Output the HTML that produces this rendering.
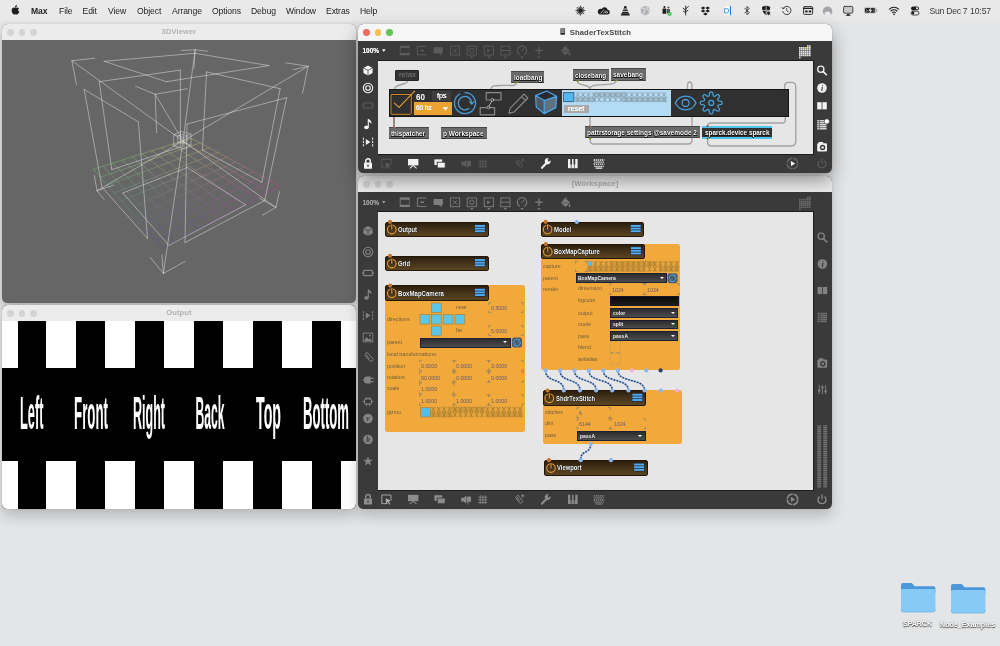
<!DOCTYPE html>
<html lang="en">
<head>
<meta charset="utf-8">
<title>Max - ShaderTexStitch</title>
<style>
*{box-sizing:border-box;margin:0;padding:0}
html,body{width:1000px;height:646px;overflow:hidden}
body{background:#e4e5e6;font-family:"Liberation Sans",sans-serif;position:relative;color:#222}
.abs{position:absolute}
svg{position:absolute;overflow:visible}
/* menubar */
#menubar{position:absolute;left:0;top:0;width:1000px;height:21px;background:#e9e9ea;font-size:8.6px;letter-spacing:-.1px;color:#1d1d1d}
#menubar span{position:absolute;top:5.7px;line-height:11px;white-space:nowrap}
/* windows */
.win{position:absolute;border-radius:5.5px;overflow:hidden;background:#3a3a3a}
.shadow{position:absolute;border-radius:6px}
.title{position:absolute;left:0;top:0;right:0;height:17px;background:#ececec;text-align:center;font-size:7.6px;line-height:17px;color:#b2b2b2;font-weight:bold;letter-spacing:.1px}
.title.active{background:#f6f6f6;color:#3c3c3c;font-weight:normal}
.tl{position:absolute;top:4.9px;width:6.8px;height:6.8px;margin-left:0;border-radius:50%;background:#d4d4d4}
.bar{position:absolute;background:#3a3a3a}
.patch{position:absolute;background:#e6e6e6}
/* max objects */
.obj{position:absolute;height:12px;background:#6a6a6a;border-top:1.6px solid #474747;border-bottom:1.6px solid #474747;color:#fff;font-weight:bold;white-space:nowrap;text-shadow:.5px .5px .2px #111,-.5px .5px .2px #111,.5px -.5px .2px #222,-.5px -.5px .2px #222}
.sx{position:absolute;display:inline-block;white-space:nowrap;transform-origin:0 50%;line-height:1.2}
/* sparck nodes */
.node{position:absolute;font-weight:bold;border-radius:2px;background:linear-gradient(#2d1f0d,#46341a 50%,#5a4522);border:1px solid #24170a;color:#fff;white-space:nowrap;text-shadow:.4px .4px .3px #000,-.4px .4px .3px #000,0 -.4px .3px #000}
.ham{position:absolute;right:2.4px;top:2.2px;width:11px;height:9.4px;background:#26262e;border-radius:1px}
.ham:before{content:"";position:absolute;left:.8px;right:.8px;top:1px;height:1.9px;background:#55adf0;box-shadow:0 2.75px 0 #55adf0,0 5.5px 0 #55adf0}
.orange{position:absolute;background:#f2a93c;border-radius:2.5px}
.lbl{position:absolute;font-size:6.2px;line-height:8px;color:#6b5a3a;white-space:nowrap}
.num{position:absolute;font-size:6.2px;line-height:8px;color:#6b5a3a;white-space:nowrap}
.dd{position:absolute;background:linear-gradient(#2c2c2e,#4c4c4c);border:1px solid #1a2036}
.dd:after{content:"";position:absolute;right:2.4px;top:2.6px;border-left:2.3px solid transparent;border-right:2.3px solid transparent;border-top:2.8px solid #fff}
</style>
</head>
<body>
<div id="root" style="position:absolute;left:0;top:0;width:1000px;height:646px;will-change:transform">

<!-- ============ MENU BAR ============ -->
<div id="menubar">
<span style="left:31px;font-weight:bold">Max</span>
<span style="left:59px">File</span>
<span style="left:82.5px">Edit</span>
<span style="left:108px">View</span>
<span style="left:137px">Object</span>
<span style="left:172px">Arrange</span>
<span style="left:212px">Options</span>
<span style="left:251px">Debug</span>
<span style="left:286px">Window</span>
<span style="left:326px">Extras</span>
<span style="left:360px">Help</span>
<span style="left:929.5px;color:#3a3a3a;letter-spacing:-.25px">Sun Dec 7</span>
<span style="left:970px;color:#3a3a3a">10:57</span>
<svg style="left:0;top:0" width="1000" height="21" viewBox="0 0 1000 21" fill="none" stroke-linecap="round" stroke-linejoin="round"><path d="M13.9 7.4c.7 0 1.1.4 1.6.4s1-.45 1.8-.4c.6 0 1.3.3 1.8.95-1.4.9-1.2 2.8.25 3.4-.3.8-.7 1.5-1.15 2-.4.5-.8.8-1.3.8s-.8-.3-1.4-.3-.9.3-1.4.3-.9-.4-1.35-.95c-1.1-1.4-1.45-3.6-.75-4.8.4-.8 1.15-1.35 1.9-1.4zM17 5c.1.65-.15 1.25-.5 1.7-.4.45-.95.75-1.5.7-.1-.6.2-1.2.5-1.6.4-.45 1-.75 1.5-.8z" fill="#1e1e1e"/><path d="M581.60 10.60L585.00 10.60M581.51 11.06L583.82 12.02M581.25 11.45L583.65 13.85M580.86 11.71L581.82 14.02M580.40 11.80L580.40 15.20M579.94 11.71L578.98 14.02M579.55 11.45L577.15 13.85M579.29 11.06L576.98 12.02M579.20 10.60L575.80 10.60M579.29 10.14L576.98 9.18M579.55 9.75L577.15 7.35M579.94 9.49L578.98 7.18M580.40 9.40L580.40 6.00M580.86 9.49L581.82 7.18M581.25 9.75L583.65 7.35M581.51 10.14L583.82 9.18" stroke="#1e1e1e" stroke-width=".8"/><circle cx="580.4" cy="10.6" r="1.7" fill="#1e1e1e"/><path d="M599.8 14.4h7.6a2.3 2.3 0 0 0 .2-4.6a3.2 3.2 0 0 0-6-.9a2.8 2.8 0 0 0-1.8 5.5z" fill="#1e1e1e"/><path d="M600.8 13.2l2.8-3.4M603.6 13.2l1.8-2.2" stroke="#e9e9ea" stroke-width=".7"/><circle cx="606.5" cy="12.3" r=".9" stroke="#e9e9ea" stroke-width=".6"/><path d="M624.5 6h1.6l2.8 7.4h-7.2z" fill="#1e1e1e"/><path d="M620.8 15.4l.5-2h8l.5 2z" fill="#1e1e1e"/><path d="M623.4 9h3.8M622.6 11.4h5.4" stroke="#e9e9ea" stroke-width=".9"/><circle cx="645.2" cy="10.6" r="4.6" fill="#b4b4b8"/><path d="M642.4 8.2q1.8-.6 2.6.8t-.6 2.2-.4 2.4M647 7.2q-.4 1.6 1 2.4t1.4 2.6" stroke="#e9e9ea" stroke-width="1"/><circle cx="664.4" cy="7" r="1.1" fill="#1e1e1e"/><rect x="662.5" y="8.6" width="3.8" height="5.2" rx=".5" fill="#1e1e1e"/><circle cx="668.4" cy="7.6" r="1" fill="#555"/><rect x="666.8" y="9" width="3.2" height="4.4" rx=".5" fill="#555"/><circle cx="669.6" cy="13.8" r="2.1" fill="#2db842"/><path d="M668.6 13.8l.8.8 1.3-1.5" stroke="#fff" stroke-width=".7"/><path d="M685.7 15v-9M685.7 10.4l-2.6-2.2M685.7 9l2.8-2.6M685.7 12.4l-2.2-1M685.7 11.6l2.2-1.2" stroke="#1e1e1e" stroke-width=".9"/><path d="M703.1 6.5l2.3 1.5-2.3 1.5-2.3-1.5zM707.7 6.5l2.3 1.5-2.3 1.5-2.3-1.5zM703.1 9.5l2.3 1.5-2.3 1.5-2.3-1.5zM707.7 9.5l2.3 1.5-2.3 1.5-2.3-1.5zM705.4 12.5l2.3 1.5-2.3 1.5-2.3-1.5z" fill="#1e1e1e"/><rect x="723.4" y="5.8" width="7.8" height="9.6" rx=".8" fill="#fff" stroke="#d0d4da" stroke-width=".4"/><path d="M730.4 6.6v8" stroke="#2f6fd8" stroke-width="1.1"/><path d="M725 8.4h1.4a2.3 2.3 0 0 1 0 4.6h-1.4z" stroke="#3aa0e8" stroke-width="1"/><path d="M744.8 8.2l4.4 4.4-2.2 2.2v-8.4l2.2 2.2-4.4 4.4" stroke="#1e1e1e" stroke-width=".8"/><path d="M762 7q4.1-2.6 8.2 0 0 5.6-4.1 8.2-4.1-2.6-4.1-8.2z" fill="#1e1e1e"/><path d="M766.1 6v9M762.4 10.4h7.4" stroke="#e9e9ea" stroke-width=".7"/><circle cx="768.6" cy="13.2" r="2" fill="#1e1e1e" stroke="#e9e9ea" stroke-width=".7"/><path d="M783.2 8.2a4.2 4.2 0 1 1-.5 3.4" stroke="#1e1e1e" stroke-width=".8"/><path d="M781.8 7.4l1.2 1.6 1.6-1" stroke="#1e1e1e" stroke-width=".7"/><path d="M786.7 8.2v2.6l1.6 1" stroke="#1e1e1e" stroke-width=".7"/><rect x="803.6" y="6.6" width="9" height="7.8" rx="1" stroke="#1e1e1e" stroke-width=".9"/><path d="M803.6 8.4h9" stroke="#1e1e1e" stroke-width="1.4"/><rect x="805.2" y="10.4" width="2.4" height="2" fill="#1e1e1e"/><rect x="808.8" y="10.4" width="2.4" height="2" fill="#1e1e1e"/><path d="M824.4 15a4.8 4.8 0 1 1 6.4 0q-.2-3.4-3.2-3.4t-3.2 3.4z" fill="#a4a4a8"/><rect x="843.6" y="6.4" width="9.2" height="6.8" rx="1" fill="#c9c9cc" stroke="#333" stroke-width=".9"/><path d="M846.6 15.4h3.2l-.6-1.4h-2z" fill="#1e1e1e"/><path d="M846.2 15.4h4" stroke="#1e1e1e" stroke-width=".7"/><rect x="864" y="7.2" width="12" height="6.4" rx="1.6" fill="#b9b9bc"/><rect x="865" y="8.1" width="10" height="4.6" rx="1" fill="#2a2a2a"/><path d="M876.7 9.4v2" stroke="#999" stroke-width=".9"/><path d="M870.9 7.6l-2.2 3.2h1.6l-.8 2.6 2.4-3.4h-1.6z" fill="#e9e9ea" stroke="#e9e9ea" stroke-width=".3"/><path d="M866 9.2l1.6 1.4-1.6 1.2M874.6 9.2l-1.4 1.4 1.4 1.2" stroke="#bbb" stroke-width=".6"/><path d="M889.4 9.2a6.5 6.5 0 0 1 9.2 0M891 11a4.2 4.2 0 0 1 6 0M892.6 12.7a2 2 0 0 1 2.8 0" stroke="#1e1e1e" stroke-width="1.1"/><circle cx="894" cy="14.4" r=".8" fill="#1e1e1e"/><rect x="911" y="6.4" width="8" height="3.8" rx="1.9" fill="#1e1e1e"/><circle cx="917" cy="8.3" r="1.1" fill="#e9e9ea"/><rect x="911" y="11.2" width="8" height="3.8" rx="1.9" fill="none" stroke="#1e1e1e" stroke-width=".8"/><circle cx="913" cy="13.1" r="1.3" fill="#1e1e1e"/></svg>
</div>

<!-- ============ 3DViewer ============ -->
<div class="shadow" style="left:2px;top:24px;width:354px;height:279px;box-shadow:0 7px 14px rgba(0,0,0,.2),0 0 1px rgba(0,0,0,.4)"></div>
<div class="win" id="viewer" style="left:2px;top:24px;width:354px;height:279px;background:#666">
<div class="title" style="height:15.6px;line-height:15.8px">3DViewer<i class="tl" style="left:5px"></i><i class="tl" style="left:16.5px"></i><i class="tl" style="left:28px"></i></div>
<svg style="left:-2px;top:-24px" width="356" height="303" viewBox="0 0 356 303" fill="none" stroke-linecap="round">
<defs><linearGradient id="g0" gradientUnits="userSpaceOnUse" x1="93.3" y1="169.3" x2="191.2" y2="138.2"><stop offset="0" stop-color="#6ed778"/><stop offset="1" stop-color="#cdcd6e"/></linearGradient><linearGradient id="g1" gradientUnits="userSpaceOnUse" x1="93.3" y1="169.3" x2="163.4" y2="248.2"><stop offset="0" stop-color="#6ed778"/><stop offset="1" stop-color="#3c3ca0"/></linearGradient><linearGradient id="g2" gradientUnits="userSpaceOnUse" x1="100.3" y1="177.2" x2="200.1" y2="143.0"><stop offset="0" stop-color="#69c87c"/><stop offset="1" stop-color="#cdbe73"/></linearGradient><linearGradient id="g3" gradientUnits="userSpaceOnUse" x1="103.1" y1="166.2" x2="175.1" y2="242.0"><stop offset="0" stop-color="#78d677"/><stop offset="1" stop-color="#4a3ca0"/></linearGradient><linearGradient id="g4" gradientUnits="userSpaceOnUse" x1="107.3" y1="185.1" x2="209.0" y2="147.7"><stop offset="0" stop-color="#64b880"/><stop offset="1" stop-color="#cdb078"/></linearGradient><linearGradient id="g5" gradientUnits="userSpaceOnUse" x1="112.9" y1="163.1" x2="186.7" y2="235.7"><stop offset="0" stop-color="#81d576"/><stop offset="1" stop-color="#593ca0"/></linearGradient><linearGradient id="g6" gradientUnits="userSpaceOnUse" x1="114.3" y1="193.0" x2="217.9" y2="152.5"><stop offset="0" stop-color="#5fa884"/><stop offset="1" stop-color="#cda27d"/></linearGradient><linearGradient id="g7" gradientUnits="userSpaceOnUse" x1="122.7" y1="160.0" x2="198.4" y2="229.5"><stop offset="0" stop-color="#8ad475"/><stop offset="1" stop-color="#683ca0"/></linearGradient><linearGradient id="g8" gradientUnits="userSpaceOnUse" x1="121.3" y1="200.9" x2="226.8" y2="157.2"><stop offset="0" stop-color="#5a9988"/><stop offset="1" stop-color="#cd9382"/></linearGradient><linearGradient id="g9" gradientUnits="userSpaceOnUse" x1="132.5" y1="156.9" x2="210.1" y2="223.2"><stop offset="0" stop-color="#94d374"/><stop offset="1" stop-color="#763ca0"/></linearGradient><linearGradient id="g10" gradientUnits="userSpaceOnUse" x1="128.3" y1="208.8" x2="235.7" y2="162.0"><stop offset="0" stop-color="#558a8c"/><stop offset="1" stop-color="#cd8487"/></linearGradient><linearGradient id="g11" gradientUnits="userSpaceOnUse" x1="142.2" y1="153.8" x2="221.8" y2="217.0"><stop offset="0" stop-color="#9ed273"/><stop offset="1" stop-color="#843ca0"/></linearGradient><linearGradient id="g12" gradientUnits="userSpaceOnUse" x1="135.4" y1="216.6" x2="244.5" y2="166.8"><stop offset="0" stop-color="#507a90"/><stop offset="1" stop-color="#cd768c"/></linearGradient><linearGradient id="g13" gradientUnits="userSpaceOnUse" x1="152.0" y1="150.6" x2="233.4" y2="210.8"><stop offset="0" stop-color="#a7d172"/><stop offset="1" stop-color="#933ca0"/></linearGradient><linearGradient id="g14" gradientUnits="userSpaceOnUse" x1="142.4" y1="224.5" x2="253.4" y2="171.5"><stop offset="0" stop-color="#4b6a94"/><stop offset="1" stop-color="#cd6891"/></linearGradient><linearGradient id="g15" gradientUnits="userSpaceOnUse" x1="161.8" y1="147.5" x2="245.1" y2="204.5"><stop offset="0" stop-color="#b0d071"/><stop offset="1" stop-color="#a23ca0"/></linearGradient><linearGradient id="g16" gradientUnits="userSpaceOnUse" x1="149.4" y1="232.4" x2="262.3" y2="176.3"><stop offset="0" stop-color="#465b98"/><stop offset="1" stop-color="#cd5996"/></linearGradient><linearGradient id="g17" gradientUnits="userSpaceOnUse" x1="171.6" y1="144.4" x2="256.8" y2="198.3"><stop offset="0" stop-color="#bacf70"/><stop offset="1" stop-color="#b03ca0"/></linearGradient><linearGradient id="g18" gradientUnits="userSpaceOnUse" x1="156.4" y1="240.3" x2="271.2" y2="181.0"><stop offset="0" stop-color="#414c9c"/><stop offset="1" stop-color="#cd4a9b"/></linearGradient><linearGradient id="g19" gradientUnits="userSpaceOnUse" x1="181.4" y1="141.3" x2="268.4" y2="192.0"><stop offset="0" stop-color="#c4ce6f"/><stop offset="1" stop-color="#be3ca0"/></linearGradient><linearGradient id="g20" gradientUnits="userSpaceOnUse" x1="163.4" y1="248.2" x2="280.1" y2="185.8"><stop offset="0" stop-color="#3c3ca0"/><stop offset="1" stop-color="#cd3ca0"/></linearGradient><linearGradient id="g21" gradientUnits="userSpaceOnUse" x1="191.2" y1="138.2" x2="280.1" y2="185.8"><stop offset="0" stop-color="#cdcd6e"/><stop offset="1" stop-color="#cd3ca0"/></linearGradient></defs>
<g stroke-width="0.7" stroke-opacity="0.55"><line x1="93.3" y1="169.3" x2="191.2" y2="138.2" stroke="url(#g0)"/><line x1="93.3" y1="169.3" x2="163.4" y2="248.2" stroke="url(#g1)"/><line x1="100.3" y1="177.2" x2="200.1" y2="143.0" stroke="url(#g2)"/><line x1="103.1" y1="166.2" x2="175.1" y2="242.0" stroke="url(#g3)"/><line x1="107.3" y1="185.1" x2="209.0" y2="147.7" stroke="url(#g4)"/><line x1="112.9" y1="163.1" x2="186.7" y2="235.7" stroke="url(#g5)"/><line x1="114.3" y1="193.0" x2="217.9" y2="152.5" stroke="url(#g6)"/><line x1="122.7" y1="160.0" x2="198.4" y2="229.5" stroke="url(#g7)"/><line x1="121.3" y1="200.9" x2="226.8" y2="157.2" stroke="url(#g8)"/><line x1="132.5" y1="156.9" x2="210.1" y2="223.2" stroke="url(#g9)"/><line x1="128.3" y1="208.8" x2="235.7" y2="162.0" stroke="url(#g10)"/><line x1="142.2" y1="153.8" x2="221.8" y2="217.0" stroke="url(#g11)"/><line x1="135.4" y1="216.6" x2="244.5" y2="166.8" stroke="url(#g12)"/><line x1="152.0" y1="150.6" x2="233.4" y2="210.8" stroke="url(#g13)"/><line x1="142.4" y1="224.5" x2="253.4" y2="171.5" stroke="url(#g14)"/><line x1="161.8" y1="147.5" x2="245.1" y2="204.5" stroke="url(#g15)"/><line x1="149.4" y1="232.4" x2="262.3" y2="176.3" stroke="url(#g16)"/><line x1="171.6" y1="144.4" x2="256.8" y2="198.3" stroke="url(#g17)"/><line x1="156.4" y1="240.3" x2="271.2" y2="181.0" stroke="url(#g18)"/><line x1="181.4" y1="141.3" x2="268.4" y2="192.0" stroke="url(#g19)"/><line x1="163.4" y1="248.2" x2="280.1" y2="185.8" stroke="url(#g20)"/><line x1="191.2" y1="138.2" x2="280.1" y2="185.8" stroke="url(#g21)"/></g>
<g stroke="#d8d8d8" stroke-width="0.7" stroke-opacity="0.78"><path d="M71.9 60.7L94.7 58.2M71.9 60.7L76.5 84.8M71.9 60.7L183.0 141.0M195.1 49.8L181.4 50.5M195.1 49.8L207.3 51.2M195.1 49.8L194.0 68.0M195.1 49.8L183.0 141.0M308.1 66.3L285.7 62.8M308.1 66.3L293.1 69.7M308.1 66.3L302.5 93.5M308.1 66.3L183.0 141.0M97.1 190.7L94.3 175.7M97.1 190.7L113.9 185.1M97.1 190.7L104.1 199.5M97.1 190.7L183.0 141.0M275.9 207.5L279.4 191.7M275.9 207.5L262.3 215.2M275.9 207.5L259.8 198.4M275.9 207.5L183.0 141.0M163.4 273.4L150.2 257.4M163.4 273.4L185.0 261.4M163.4 273.4L162.0 255.2M163.4 273.4L183.0 141.0M155.2 94.3L135.6 86.2M155.2 94.3L187.4 88.7M155.2 94.3L156.6 132.6M155.2 94.3L183.0 141.0M104.1 61.3L195.1 53.3M195.1 53.3L268.9 65.6M268.9 65.6L166.4 81.7M166.4 81.7L104.1 61.3M99.2 81.7L180.4 70.1M180.4 70.1L180.4 147.0M180.4 147.0L111.8 169.7M111.8 169.7L99.2 81.7M84.1 89.3L138.4 121.9M138.4 121.9L147.5 238.4M147.5 238.4L102.0 187.2M102.0 187.2L84.1 89.3M206.6 71.9L280.1 88.7M280.1 88.7L261.9 182.3M261.9 182.3L202.4 150.1M202.4 150.1L206.6 71.9M286.7 97.7L187.0 124.0M187.0 124.0L185.0 242.6M185.0 242.6L264.7 200.5M264.7 200.5L286.7 97.7M122.8 193.0L187.2 167.5M187.2 167.5L245.5 204.8M245.5 204.8L169.0 245.4M169.0 245.4L122.8 193.0"/><path d="M174 134.5l6.5-3 10.5 2.5v11l-7 4-10-3.5zM174 134.5l10 3 7-3.5M184 137.5v11.5M180.5 131.5v10l-6.5 3.5M180.5 141.5l10.5 3.5M178 136l4-1.5 5 1v6l-4 2-5-1.5z" stroke-width="0.6"/></g></svg>
</div>

<!-- ============ Output ============ -->
<div class="shadow" style="left:2px;top:305px;width:354px;height:203.6px;box-shadow:0 7px 14px rgba(0,0,0,.2),0 0 1px rgba(0,0,0,.4)"></div>
<div class="win" id="output" style="left:2px;top:305px;width:354px;height:203.6px;background:#000">
<div class="title" style="height:15.6px;line-height:15.8px">Output<i class="tl" style="left:5px"></i><i class="tl" style="left:16.5px"></i><i class="tl" style="left:28px"></i></div>
<div class="abs" style="left:0;top:15.6px;width:354px;height:188px;background:#000"></div>
<div class="abs" style="left:0px;top:15.6px;width:15.5px;height:47.1px;background:#fff"></div>
<div class="abs" style="left:0px;top:155.5px;width:15.5px;height:48.2px;background:#fff"></div>
<div class="abs" style="left:44.3px;top:15.6px;width:30px;height:47.1px;background:#fff"></div>
<div class="abs" style="left:44.3px;top:155.5px;width:30px;height:48.2px;background:#fff"></div>
<div class="abs" style="left:103.3px;top:15.6px;width:30px;height:47.1px;background:#fff"></div>
<div class="abs" style="left:103.3px;top:155.5px;width:30px;height:48.2px;background:#fff"></div>
<div class="abs" style="left:162.3px;top:15.6px;width:30px;height:47.1px;background:#fff"></div>
<div class="abs" style="left:162.3px;top:155.5px;width:30px;height:48.2px;background:#fff"></div>
<div class="abs" style="left:221.3px;top:15.6px;width:30px;height:47.1px;background:#fff"></div>
<div class="abs" style="left:221.3px;top:155.5px;width:30px;height:48.2px;background:#fff"></div>
<div class="abs" style="left:280.3px;top:15.6px;width:30px;height:47.1px;background:#fff"></div>
<div class="abs" style="left:280.3px;top:155.5px;width:30px;height:48.2px;background:#fff"></div>
<div class="abs" style="left:339.3px;top:15.6px;width:14.7px;height:47.1px;background:#fff"></div>
<div class="abs" style="left:339.3px;top:155.5px;width:14.7px;height:48.2px;background:#fff"></div>
<svg style="left:0;top:0" width="354" height="204" viewBox="0 0 354 204" font-family="'Liberation Sans',sans-serif" font-size="46" font-weight="bold" fill="#fff"><text x="18" y="124" textLength="23.5" lengthAdjust="spacingAndGlyphs">Left</text><text x="72" y="124" textLength="34" lengthAdjust="spacingAndGlyphs">Front</text><text x="131" y="124" textLength="32" lengthAdjust="spacingAndGlyphs">Right</text><text x="193.5" y="124" textLength="29" lengthAdjust="spacingAndGlyphs">Back</text><text x="254" y="124" textLength="25" lengthAdjust="spacingAndGlyphs">Top</text><text x="301" y="124" textLength="46" lengthAdjust="spacingAndGlyphs">Bottom</text></svg>
</div>

<!-- ============ Workspace ============ -->
<div class="shadow" style="left:358px;top:176px;width:474px;height:332.6px;box-shadow:0 7px 14px rgba(0,0,0,.2),0 0 1px rgba(0,0,0,.4)"></div>
<div class="win" id="workspace" style="left:358px;top:176px;width:474px;height:332.6px">
<div class="title" style="height:16.4px;line-height:16.4px">[Workspace]<i class="tl" style="left:5px"></i><i class="tl" style="left:16.5px"></i><i class="tl" style="left:28px"></i></div>
<div class="patch" style="left:20px;top:35px;width:436.2px;height:279.6px;border:1px solid #1c1c1c;border-left:0"></div>
<div class="abs" style="left:-358px;top:-176px;width:1000px;height:646px">
<svg style="left:0;top:0" width="1000" height="646" viewBox="0 0 1000 646" fill="none" stroke="#7e7e7e" stroke-width="1"><path d="M400.2 197.6v9.2" stroke-width="0.9"/><path d="M409.4 197.6v9.2" stroke-width="0.5"/><path d="M400 198.6h9.6M400 205.79999999999998h9.6" stroke-width="2.2"/><path d="M426.4 198.0h-9v8.4h9" stroke-width="1"/><path d="M420.5 202.2h3.5" stroke-width="1.6"/><path d="M433.6 199.0h9.3v6h-1.6l.4 2.4-2.8-2.4h-5.3z" fill="#7e7e7e" stroke="none"/><rect x="450.4" y="197.9" width="9.2" height="8.8" stroke-width="0.9"/><path d="M453.0 200.29999999999998l4 4M457.0 200.29999999999998l-4 4" stroke-width="0.9"/><rect x="467.2" y="197.9" width="9.2" height="8.8" stroke-width="0.9"/><circle cx="471.8" cy="202.2" r="2.2" stroke-width="0.9"/><rect x="484.2" y="197.9" width="9.2" height="8.8" stroke-width="0.9"/><path d="M487.2 200.39999999999998l3 1.8-3 1.8z" fill="#7e7e7e" stroke="none"/><rect x="500.8" y="197.9" width="9.2" height="8.8" stroke-width="0.9"/><path d="M500.8 202.2h9.2" stroke-width="0.9"/><path d="M519.8 206.39999999999998a4.7 4.7 0 1 1 4.4 0" stroke-width="1.1"/><path d="M521.8 202.79999999999998l2.2-3" stroke-width="1"/><path d="M535.2 202.2h7.6M539 198.39999999999998v7.6" stroke-width="1.3"/><path d="M560.9 202.79999999999998l4.4-4.6 4.8 4.2-3.8 3.9q-.8.8-1.6 0z" fill="#7e7e7e" stroke="none"/><path d="M563.5 200.0l1.8-2a1 1 0 0 1 1.5 0l.6.6" stroke-width="0.8"/><path d="M569.5 204.0q1.8 2.4 0 3.2q-1.8-.8 0-3.2z" fill="#7e7e7e" stroke="none"/><path d="M562.1 202.79999999999998h6.6" stroke="#3a3a3a" stroke-width="0.6"/><path d="M470.1 208.1h3.4l-1.7 2z" fill="#7e7e7e" stroke="none"/><path d="M487.1 208.1h3.4l-1.7 2z" fill="#7e7e7e" stroke="none"/><path d="M503.7 208.1h3.4l-1.7 2z" fill="#7e7e7e" stroke="none"/><path d="M520.3 208.1h3.4l-1.7 2z" fill="#7e7e7e" stroke="none"/><path d="M537.3 208.1h3.4l-1.7 2z" fill="#7e7e7e" stroke="none"/><path d="M382 201.0h3.6l-1.8 2.6z" fill="#9c9c9c" stroke="none"/><path d="M799 199.55H811M799 201.47H811M799 203.39H811M799 205.31H811M799 207.23H811M807 197.60H811M799 209.20H801" stroke="#686868" stroke-width="1.55" stroke-dasharray="1.62 .38" stroke-linecap="butt"/></svg><div class="abs" style="left:362.5px;top:196.7px;font-size:6.6px;line-height:11px;color:#9c9c9c;font-weight:bold;letter-spacing:-.05px;text-shadow:0 0 .4px #9c9c9c">100%</div>
<svg style="left:0;top:0" width="1000" height="646" viewBox="0 0 1000 646" fill="none" stroke-width="1"><rect x="364" y="498.4" width="8" height="6.2" rx=".9" fill="#8c8c8c"/><path d="M365.7 498.59999999999997v-1.7a2.3 2.3 0 0 1 4.6 0v1.7" stroke="#8c8c8c" stroke-width="1.5"/><rect x="367.3" y="500.4" width="1.4" height="2.2" rx=".5" fill="#3a3a3a"/><path d="M391.0 500.4v-5.4h-9.2v8.6h5.6" stroke="#b0b0b0" stroke-width="0.9"/><path d="M385.59999999999997 498.2l5.4 2.4-2.3.8 1.8 2.6-1 .7-1.8-2.6-1.6 1.7z" fill="#b0b0b0"/><rect x="408.0" y="494.79999999999995" width="10.4" height="6.4" fill="#8c8c8c"/><path d="M409.8 504.2l3.4-3 3.4 3" stroke="#8c8c8c" stroke-width="1.1"/><rect x="434.40000000000003" y="495.2" width="7.8" height="5.6" fill="#8c8c8c"/><rect x="437.2" y="498.0" width="8" height="5.8" fill="#8c8c8c" stroke="#3a3a3a" stroke-width="0.9"/><path d="M461.2 497.79999999999995h2.4l2.6-2v7.6l-2.6-2h-2.4z" fill="#8c8c8c"/><rect x="466.6" y="496.59999999999997" width="4.4" height="5.2" fill="#8c8c8c"/><path d="M468 501.79999999999995v2.6" stroke="#8c8c8c" stroke-width="0.9"/><path d="M478.40000000000003 497.2h8.8M478.40000000000003 499.79999999999995h8.8M478.40000000000003 502.4h8.8M480.2 495.2v8.8M482.8 495.2v8.8M485.40000000000003 495.2v8.8" stroke="#8c8c8c" stroke-width="0.8"/><path d="M515.4 497.2l3.8 5.2a1.7 1.7 0 0 0 2.8-2l-3.4-4.6a1.1 1.1 0 0 0-1.8 1.2l2.8 3.8" stroke="#8c8c8c" stroke-width="0.9"/><path d="M521 495.79999999999995h3.4M522.7 494.09999999999997v3.4" stroke="#8c8c8c" stroke-width="0.9"/><path d="M542 503.59999999999997l5-5.2" stroke="#8c8c8c" stroke-width="2.2" stroke-linecap="round"/><path d="M550.6 496.0l-2 2-1.6-.4-.4-1.6 2-2a3 3 0 1 0 2 2z" fill="#8c8c8c"/><circle cx="547.6" cy="497.79999999999995" r="2.4" fill="#8c8c8c"/><path d="M548.2 497.09999999999997l2.6-2.6" stroke="#3a3a3a" stroke-width="1.5"/><rect x="568.0" y="494.79999999999995" width="9.6" height="9.2" fill="#8c8c8c"/><path d="M571.1999999999999 494.79999999999995v9.2M574.4 494.79999999999995v9.2" stroke="#3a3a3a" stroke-width="0.7"/><path d="M571.1999999999999 494.79999999999995v5.4M574.4 494.79999999999995v5.4" stroke="#3a3a3a" stroke-width="1.7"/><path d="M593.6 495.8h10.8M594.2 497.9h9.6M593.6 500.0h10.8M594.2 502.1h9.6" stroke="#8c8c8c" stroke-width="1.3" stroke-dasharray="1.4 0.7"/><path d="M595.6 504.0h6.8" stroke="#8c8c8c" stroke-width="1.2"/><circle cx="792.5" cy="499.4" r="5.2" stroke="#8c8c8c" stroke-width="1.6" stroke-dasharray="7.2 .97" stroke-dashoffset="-.48"/><path d="M790.9 496.79999999999995l4.2 2.6-4.2 2.6z" fill="#8c8c8c"/><path d="M819.5 496.59999999999997a4 4 0 1 0 5 0" stroke="#8c8c8c" stroke-width="1.3"/><path d="M822 494.59999999999997v4.6" stroke="#8c8c8c" stroke-width="1.3"/></svg>
<svg style="left:0;top:0" width="1000" height="646" viewBox="0 0 1000 646" fill="none"><path d="M368 226l4.6 2.4v5.2l-4.6 2.4-4.6-2.4v-5.2z" fill="#838383"/><path d="M363.4 228.4l4.6 2.4 4.6-2.4M368 230.8v5.2" stroke="#3a3a3a" stroke-width="0.7" fill="none"/><circle cx="368" cy="252" r="4.7" stroke="#838383" stroke-width="1.1" fill="none"/><circle cx="368" cy="252" r="2.3" stroke="#838383" stroke-width="1.1" fill="none"/><rect x="363.7" y="270.3" width="8.6" height="5.4" rx=".8" stroke="#838383" stroke-width="1.2" fill="none"/><path d="M362.7 271.8v2.4M373.3 271.8v2.4" stroke="#838383" stroke-width=".9"/><ellipse cx="366.4" cy="297.9" rx="2.3" ry="1.8" fill="#838383"/><path d="M368.3 297.9v-8.4" stroke="#838383" stroke-width="1.1"/><path d="M368.3 289.5q3.6 1.2 3 5.2q-.6-2.4-3-2.8z" fill="#838383"/><path d="M363.4 311.1v8.8M372.6 311.1v8.8" stroke="#838383" stroke-width="1" stroke-dasharray="2.2 1.1"/><path d="M365.8 312.5l4.6 3-4.6 3z" fill="#838383"/><rect x="363.2" y="333.1" width="9.6" height="8.8" stroke="#838383" stroke-width="0.9" fill="none"/><path d="M364 341.1l2.6-4 2 2.4 1.4-1.4 2 3z" fill="#838383"/><circle cx="370" cy="335.5" r=".9" fill="#838383"/><path d="M364.6 355.1l5 5.6a1.9 1.9 0 0 0 2.8-2.6l-4.6-5a1.2 1.2 0 0 0-1.9 1.6l3.8 4.2" stroke="#838383" stroke-width="1" fill="none"/><path d="M367.1 376.6h3.6v6.8h-3.6a3.4 3.4 0 0 1 0-6.8z" fill="#838383"/><path d="M370.7 378.4h2.8M370.7 381.6h2.8" stroke="#838383" stroke-width="1.1"/><path d="M363.7 380h-1" stroke="#838383" stroke-width="1.2"/><rect x="364.6" y="398.9" width="6.8" height="5.2" rx="1.2" stroke="#838383" stroke-width="1.1" fill="none"/><path d="M362.6 401.5h2M371.4 401.5h2M366.4 396.9v2M369.6 396.9v2M366.4 404.1v2M369.6 404.1v2" stroke="#838383" stroke-width="1"/><circle cx="368" cy="418.5" r="4.8" fill="#838383"/><text x="368" y="420.8" font-size="7.5" font-style="italic" font-weight="bold" font-family="'Liberation Serif',serif" text-anchor="middle" fill="#3a3a3a">v</text><circle cx="368" cy="439.5" r="4.8" fill="#838383"/><text x="368" y="441.8" font-size="7.5" font-style="italic" font-weight="bold" font-family="'Liberation Serif',serif" text-anchor="middle" fill="#3a3a3a">b</text><polygon points="368.0,456.2 369.2,459.7 372.9,459.8 370.0,462.0 371.1,465.6 368.0,463.5 364.9,465.6 366.0,462.0 363.1,459.8 366.8,459.7" fill="#838383"/><circle cx="821.1999999999999" cy="236.3" r="3.1" stroke="#838383" stroke-width="1.3" fill="none"/><path d="M823.6 238.7l3.2 3.2" stroke="#838383" stroke-width="1.6" stroke-linecap="round"/><circle cx="822.4" cy="264" r="4.8" fill="#838383"/><text x="822.6" y="266.9" font-size="8.2" font-style="italic" font-weight="bold" font-family="'Liberation Serif',serif" text-anchor="middle" fill="#3a3a3a">i</text><rect x="817.6" y="286.9" width="4.4" height="7.2" fill="#838383"/><rect x="822.8" y="286.9" width="4.4" height="7.2" fill="#838383"/><path d="M817.6 313.5h9.4M817.6 315.5h9.4M817.6 317.5h9.4M817.6 319.5h9.4M817.6 321.5h9.4" stroke="#6e6e6e" stroke-width="1.4"/><path d="M819.8 312.7v9.6" stroke="#3a3a3a" stroke-width="0.6"/><rect x="817.4000000000001" y="359.6" width="9.8" height="8.2" rx="1.2" fill="#838383"/><rect x="818.8000000000001" y="358.2" width="4.6" height="2.4" rx=".6" fill="#838383"/><circle cx="822.8000000000001" cy="363.8" r="2.7" fill="#3a3a3a"/><circle cx="822.8000000000001" cy="363.8" r="1.3" fill="#838383"/><path d="M819.1999999999999 384.9v9.2M822.4 384.9v9.2M825.6 384.9v9.2" stroke="#838383" stroke-width="0.9"/><path d="M818.0 390.5h2.4M821.1999999999999 387.5h2.4M824.4 391.3h2.4" stroke="#838383" stroke-width="1.8"/><path d="M819.2 425.2V488M825.2 425.2V488" stroke="#727272" stroke-width="3.9" stroke-dasharray="1.35 .5"/></svg>
<div class="orange" style="left:385px;top:285.4px;width:140px;height:146.4px"></div>
<div class="orange" style="left:541px;top:243.8px;width:139px;height:126.4px"></div>
<div class="orange" style="left:542.5px;top:390.4px;width:139.5px;height:53.4px"></div>
<div class="node" style="left:385px;top:221.6px;width:103.5px;height:15.4px"><span class="sx" style="left:12.3px;top:3.2px;font-size:7.3px;transform:scaleX(0.797)">Output</span></div>
<div class="node" style="left:385px;top:255.7px;width:103.5px;height:15.4px"><span class="sx" style="left:12.3px;top:3.2px;font-size:7.3px;transform:scaleX(0.799)">Grid</span></div>
<div class="node" style="left:385px;top:285.4px;width:103.5px;height:15.4px"><span class="sx" style="left:12.3px;top:3.2px;font-size:7.3px;transform:scaleX(0.832)">BoxMapCamera</span></div>
<div class="node" style="left:540.8px;top:221.6px;width:103.5px;height:15.4px"><span class="sx" style="left:12.3px;top:3.2px;font-size:7.3px;transform:scaleX(0.820)">Model</span></div>
<div class="node" style="left:541px;top:243.8px;width:103.5px;height:15.4px"><span class="sx" style="left:12.3px;top:3.2px;font-size:7.3px;transform:scaleX(0.820)">BoxMapCapture</span></div>
<div class="node" style="left:542.5px;top:390.4px;width:103.5px;height:15.4px"><span class="sx" style="left:12.3px;top:3.2px;font-size:7.3px;transform:scaleX(0.800)">ShdrTexStitch</span></div>
<div class="node" style="left:544.2px;top:460.2px;width:103.5px;height:15.4px"><span class="sx" style="left:12.3px;top:3.2px;font-size:7.3px;transform:scaleX(0.801)">Viewport</span></div>
<span class="sx" style="left:387.2px;top:315.46px;font-size:6.2px;color:#6f5e3c;transform:scaleX(0.855)">directions</span>
<span class="sx" style="left:456.4px;top:303.16px;font-size:6.2px;color:#6f5e3c;transform:scaleX(0.855)">near</span>
<span class="sx" style="left:456.4px;top:326.16px;font-size:6.2px;color:#6f5e3c;transform:scaleX(0.855)">far</span>
<span class="sx" style="left:490.8px;top:304.16px;font-size:6.2px;color:#675a6e;transform:scaleX(0.855)">0.5000</span>
<span class="sx" style="left:490.8px;top:327.36px;font-size:6.2px;color:#675a6e;transform:scaleX(0.855)">5.0000</span>
<span class="sx" style="left:387.2px;top:338.46px;font-size:6.2px;color:#6f5e3c;transform:scaleX(0.855)">parent</span>
<div class="dd" style="left:419.6px;top:337.5px;width:91.2px;height:10px"></div>
<span class="sx" style="left:387.2px;top:350.16px;font-size:6.2px;color:#6f5e3c;transform:scaleX(0.855)">local transformations:</span>
<span class="sx" style="left:387.2px;top:361.66px;font-size:6.2px;color:#6f5e3c;transform:scaleX(0.855)">position</span>
<span class="sx" style="left:387.2px;top:373.16px;font-size:6.2px;color:#6f5e3c;transform:scaleX(0.855)">rotation</span>
<span class="sx" style="left:387.2px;top:384.16px;font-size:6.2px;color:#6f5e3c;transform:scaleX(0.855)">scale</span>
<span class="sx" style="left:387.2px;top:407.96px;font-size:6.2px;color:#6f5e3c;transform:scaleX(0.855)">gizmo</span>
<span class="sx" style="left:421.3px;top:362.46px;font-size:6.2px;color:#675a6e;transform:scaleX(0.855)">0.0000</span>
<span class="sx" style="left:456px;top:362.46px;font-size:6.2px;color:#675a6e;transform:scaleX(0.855)">0.0000</span>
<span class="sx" style="left:490.8px;top:362.46px;font-size:6.2px;color:#675a6e;transform:scaleX(0.855)">3.0000</span>
<span class="sx" style="left:421.3px;top:373.76px;font-size:6.2px;color:#675a6e;transform:scaleX(0.855)">90.0000</span>
<span class="sx" style="left:456px;top:373.76px;font-size:6.2px;color:#675a6e;transform:scaleX(0.855)">0.0000</span>
<span class="sx" style="left:490.8px;top:373.76px;font-size:6.2px;color:#675a6e;transform:scaleX(0.855)">0.0000</span>
<span class="sx" style="left:421.3px;top:385.16px;font-size:6.2px;color:#675a6e;transform:scaleX(0.855)">1.0000</span>
<span class="sx" style="left:421.3px;top:396.66px;font-size:6.2px;color:#675a6e;transform:scaleX(0.855)">1.0000</span>
<span class="sx" style="left:456px;top:396.66px;font-size:6.2px;color:#675a6e;transform:scaleX(0.855)">1.0000</span>
<span class="sx" style="left:490.8px;top:396.66px;font-size:6.2px;color:#675a6e;transform:scaleX(0.855)">1.0000</span>
<span class="sx" style="left:543px;top:262.46px;font-size:6.2px;color:#6f5e3c;transform:scaleX(0.855)">capture</span>
<span class="sx" style="left:543px;top:273.76px;font-size:6.2px;color:#6f5e3c;transform:scaleX(0.855)">parent</span>
<span class="sx" style="left:543px;top:285.26px;font-size:6.2px;color:#6f5e3c;transform:scaleX(0.855)">render</span>
<span class="sx" style="left:577.8px;top:284.46px;font-size:6.2px;color:#6f5e3c;transform:scaleX(0.855)">dimension</span>
<span class="sx" style="left:577.8px;top:296.16px;font-size:6.2px;color:#6f5e3c;transform:scaleX(0.855)">bgcolor</span>
<span class="sx" style="left:577.8px;top:308.56px;font-size:6.2px;color:#6f5e3c;transform:scaleX(0.855)">output</span>
<span class="sx" style="left:577.8px;top:320.16px;font-size:6.2px;color:#6f5e3c;transform:scaleX(0.855)">mode</span>
<span class="sx" style="left:577.8px;top:331.66px;font-size:6.2px;color:#6f5e3c;transform:scaleX(0.855)">pass</span>
<span class="sx" style="left:577.8px;top:343.16px;font-size:6.2px;color:#6f5e3c;transform:scaleX(0.855)">blend</span>
<span class="sx" style="left:577.8px;top:354.76px;font-size:6.2px;color:#6f5e3c;transform:scaleX(0.855)">antialias</span>
<span class="sx" style="left:612.3px;top:285.76px;font-size:6.2px;color:#675a6e;transform:scaleX(0.855)">1024</span>
<span class="sx" style="left:646.8px;top:285.76px;font-size:6.2px;color:#675a6e;transform:scaleX(0.855)">1024</span>
<div class="dd" style="left:575.5px;top:273.2px;width:91.6px;height:9.8px"></div>
<span class="sx" style="left:578.3px;top:273.92px;font-size:6.1px;color:#fff;font-weight:bold;text-shadow:0 0 .6px #000;transform:scaleX(0.820)">BoxMapCamera</span>
<div class="abs" style="left:610px;top:296.2px;width:69px;height:9.8px;background:linear-gradient(#0a0a0a,#1c1c1c);border:1px solid #14182a"></div>
<div class="dd" style="left:610px;top:308px;width:68.4px;height:9.6px"></div>
<span class="sx" style="left:612.8px;top:308.62px;font-size:6.1px;color:#fff;font-weight:bold;text-shadow:0 0 .6px #000;transform:scaleX(0.820)">color</span>
<div class="dd" style="left:610px;top:319.6px;width:68.4px;height:9.6px"></div>
<span class="sx" style="left:612.8px;top:320.22px;font-size:6.1px;color:#fff;font-weight:bold;text-shadow:0 0 .6px #000;transform:scaleX(0.820)">split</span>
<div class="dd" style="left:610px;top:331.1px;width:68.4px;height:9.6px"></div>
<span class="sx" style="left:612.8px;top:331.72px;font-size:6.1px;color:#fff;font-weight:bold;text-shadow:0 0 .6px #000;transform:scaleX(0.820)">passA</span>
<span class="sx" style="left:545px;top:408.46px;font-size:6.2px;color:#6f5e3c;transform:scaleX(0.855)">stitches</span>
<span class="sx" style="left:545px;top:419.46px;font-size:6.2px;color:#6f5e3c;transform:scaleX(0.855)">dim</span>
<span class="sx" style="left:545px;top:431.36px;font-size:6.2px;color:#6f5e3c;transform:scaleX(0.855)">pass</span>
<span class="sx" style="left:579px;top:409.26px;font-size:6.2px;color:#675a6e;transform:scaleX(0.855)">6</span>
<span class="sx" style="left:579px;top:420.46px;font-size:6.2px;color:#675a6e;transform:scaleX(0.855)">6144</span>
<span class="sx" style="left:613.8px;top:420.46px;font-size:6.2px;color:#675a6e;transform:scaleX(0.855)">1024</span>
<div class="dd" style="left:577px;top:431px;width:68.6px;height:9.8px"></div>
<span class="sx" style="left:579.8px;top:431.72px;font-size:6.1px;color:#fff;font-weight:bold;text-shadow:0 0 .6px #000;transform:scaleX(0.820)">passA</span>
<svg style="left:0;top:0" width="1000" height="646" viewBox="0 0 1000 646" fill="none"><defs><pattern id="xo" x="430.6" y="406.9" width="5.42" height="5.2" patternUnits="userSpaceOnUse"><path d="M.8 .3Q2.7 .9 2.7 2.6Q2.7 4.3 .8 4.9M4.6 .3Q2.7 .9 2.7 2.6Q2.7 4.3 4.6 4.9" stroke="#a87c2e" stroke-width=".9" fill="none"/></pattern><pattern id="xo2" x="587.2" y="261.2" width="5.42" height="5.2" patternUnits="userSpaceOnUse"><path d="M.8 .3Q2.7 .9 2.7 2.6Q2.7 4.3 .8 4.9M4.6 .3Q2.7 .9 2.7 2.6Q2.7 4.3 4.6 4.9" stroke="#a87c2e" stroke-width=".9" fill="none"/></pattern></defs><rect x="431.4" y="303" width="9.8" height="9.6" fill="#5cc6e6" stroke="#b5873a" stroke-width=".8"/><rect x="420" y="314.5" width="9.8" height="9.6" fill="#5cc6e6" stroke="#b5873a" stroke-width=".8"/><rect x="431.4" y="314.5" width="9.8" height="9.6" fill="#5cc6e6" stroke="#b5873a" stroke-width=".8"/><rect x="443.2" y="314.5" width="9.8" height="9.6" fill="#5cc6e6" stroke="#b5873a" stroke-width=".8"/><rect x="455" y="314.5" width="9.8" height="9.6" fill="#5cc6e6" stroke="#b5873a" stroke-width=".8"/><rect x="431.4" y="326.2" width="9.8" height="9.6" fill="#5cc6e6" stroke="#b5873a" stroke-width=".8"/><rect x="430.6" y="406.6" width="92.4" height="10.6" fill="#e6a53c"/><rect x="452" y="406.9" width="33" height="5.2" fill="#d3983a"/><rect x="430.6" y="412.1" width="22" height="5.2" fill="#d3983a"/><rect x="486" y="412.1" width="37" height="5.2" fill="#d3983a"/><rect x="430.6" y="406.8" width="92.4" height="10.4" fill="url(#xo)"/><rect x="420.6" y="407.4" width="9.8" height="9.6" fill="#56b9f2" stroke="#b5873a" stroke-width=".8"/><rect x="587" y="261.2" width="92" height="10.4" fill="#e6a53c"/><rect x="610" y="261.2" width="44" height="5.2" fill="#d3983a"/><rect x="587" y="266.4" width="58" height="5.2" fill="#d3983a"/><rect x="660" y="266.4" width="19" height="5.2" fill="#d3983a"/><rect x="587.2" y="261.2" width="91.8" height="10.4" fill="url(#xo2)"/><rect x="588.2" y="261.6" width="4" height="4" fill="#58baf2"/><path d="M488.8 304.8V302.6H491.0M520.8 302.6H523V304.8M488.8 310.40000000000003V312.6H491.0M520.8 312.6H523V310.40000000000003M488.8 327.8V325.6H491.0M520.8 325.6H523V327.8M488.8 333.40000000000003V335.6H491.0M520.8 335.6H523V333.40000000000003M419.6 362.59999999999997V360.4H421.8M451.8 360.4H454.0V362.59999999999997M419.6 368.59999999999997V370.79999999999995H421.8M451.8 370.79999999999995H454.0V368.59999999999997M454.2 362.59999999999997V360.4H456.4M486.4 360.4H488.59999999999997V362.59999999999997M454.2 368.59999999999997V370.79999999999995H456.4M486.4 370.79999999999995H488.59999999999997V368.59999999999997M488.8 362.59999999999997V360.4H491.0M521.0 360.4H523.2V362.59999999999997M488.8 368.59999999999997V370.79999999999995H491.0M521.0 370.79999999999995H523.2V368.59999999999997M419.6 374.0V371.8H421.8M451.8 371.8H454.0V374.0M419.6 380.0V382.2H421.8M451.8 382.2H454.0V380.0M454.2 374.0V371.8H456.4M486.4 371.8H488.59999999999997V374.0M454.2 380.0V382.2H456.4M486.4 382.2H488.59999999999997V380.0M488.8 374.0V371.8H491.0M521.0 371.8H523.2V374.0M488.8 380.0V382.2H491.0M521.0 382.2H523.2V380.0M419.6 397.0V394.8H421.8M451.8 394.8H454.0V397.0M419.6 403.0V405.2H421.8M451.8 405.2H454.0V403.0M454.2 397.0V394.8H456.4M486.4 394.8H488.59999999999997V397.0M454.2 403.0V405.2H456.4M486.4 405.2H488.59999999999997V403.0M488.8 397.0V394.8H491.0M521.0 394.8H523.2V397.0M488.8 403.0V405.2H491.0M521.0 405.2H523.2V403.0M419.6 385.4V383.2H421.8M451.8 383.2H454V385.4M419.6 391.40000000000003V393.6H421.8M451.8 393.6H454V391.40000000000003M610 285.8V283.6H612.2M642.1999999999999 283.6H644.4V285.8M610 292.40000000000003V294.6H612.2M642.1999999999999 294.6H644.4V292.40000000000003M644.6 285.8V283.6H646.8000000000001M676.8 283.6H679V285.8M644.6 292.40000000000003V294.6H646.8000000000001M676.8 294.6H679V292.40000000000003M575.6 263.4V261.2H577.8000000000001M584.5999999999999 261.2H586.8V263.4M575.6 269.40000000000003V271.6H577.8000000000001M584.5999999999999 271.6H586.8V269.40000000000003M577 409.8V407.6H579.2M608.1999999999999 407.6H610.4V409.8M577 415.40000000000003V417.6H579.2M608.1999999999999 417.6H610.4V415.40000000000003M577 421.0V418.8H579.2M608.1999999999999 418.8H610.4V421.0M577 426.6V428.8H579.2M608.1999999999999 428.8H610.4V426.6M610.6 421.0V418.8H612.8000000000001M643.1999999999999 418.8H645.4V421.0M610.6 426.6V428.8H612.8000000000001M643.1999999999999 428.8H645.4V426.6" stroke="#94815c" stroke-width=".8"/><path d="M610.2 341.6h10.2v11h-10.2zM610.2 352.8h10.2v11.4h-10.2z" stroke="#b49a66" stroke-width=".7" stroke-dasharray="2.4 2.2"/><path d="M611 353h2M617.6 353h2" stroke="#8c7a5a" stroke-width=".8"/><rect x="512" y="337.6" width="10" height="10" rx="2.4" fill="#4b5d6c"/><path d="M513.7 343.40000000000003A3.4 3.4 0 0 1 519.6 340.40000000000003M520.3 341.8A3.4 3.4 0 0 1 514.4 344.8" stroke="#4aa3e6" stroke-width="1"/><path d="M518.2 339.0l1.8 1.4-1.8 1.2M515.8 346.20000000000005l-1.8-1.4 1.8-1.2" stroke="#4aa3e6" stroke-width=".8"/><rect x="667.6" y="273.2" width="10" height="10" rx="2.4" fill="#4b5d6c"/><path d="M669.3000000000001 279.0A3.4 3.4 0 0 1 675.2 276.0M675.9 277.4A3.4 3.4 0 0 1 670.0 280.4" stroke="#4aa3e6" stroke-width="1"/><path d="M673.8000000000001 274.59999999999997l1.8 1.4-1.8 1.2M671.4 281.8l-1.8-1.4 1.8-1.2" stroke="#4aa3e6" stroke-width=".8"/><path d="M545.6 370.4C545.6 383.4 563.8 377.4 563.8 390.4" stroke="#8fb6ea" stroke-width="1.5"/><path d="M545.6 370.4C545.6 383.4 563.8 377.4 563.8 390.4" stroke="#27406b" stroke-width="1.5" stroke-dasharray="1.5 1.5"/><path d="M560.0500000000001 370.4C560.0500000000001 383.4 579.9499999999999 377.4 579.9499999999999 390.4" stroke="#8fb6ea" stroke-width="1.5"/><path d="M560.0500000000001 370.4C560.0500000000001 383.4 579.9499999999999 377.4 579.9499999999999 390.4" stroke="#27406b" stroke-width="1.5" stroke-dasharray="1.5 1.5"/><path d="M574.5 370.4C574.5 383.4 596.0999999999999 377.4 596.0999999999999 390.4" stroke="#8fb6ea" stroke-width="1.5"/><path d="M574.5 370.4C574.5 383.4 596.0999999999999 377.4 596.0999999999999 390.4" stroke="#27406b" stroke-width="1.5" stroke-dasharray="1.5 1.5"/><path d="M588.95 370.4C588.95 383.4 612.25 377.4 612.25 390.4" stroke="#8fb6ea" stroke-width="1.5"/><path d="M588.95 370.4C588.95 383.4 612.25 377.4 612.25 390.4" stroke="#27406b" stroke-width="1.5" stroke-dasharray="1.5 1.5"/><path d="M603.4 370.4C603.4 383.4 628.4 377.4 628.4 390.4" stroke="#8fb6ea" stroke-width="1.5"/><path d="M603.4 370.4C603.4 383.4 628.4 377.4 628.4 390.4" stroke="#27406b" stroke-width="1.5" stroke-dasharray="1.5 1.5"/><path d="M617.85 370.4C617.85 383.4 644.55 377.4 644.55 390.4" stroke="#8fb6ea" stroke-width="1.5"/><path d="M617.85 370.4C617.85 383.4 644.55 377.4 644.55 390.4" stroke="#27406b" stroke-width="1.5" stroke-dasharray="1.5 1.5"/><path d="M590.8 443.8C590.8 454.8 580.8 448.8 580.8 459.8" stroke="#8fb6ea" stroke-width="1.5"/><path d="M590.8 443.8C590.8 454.8 580.8 448.8 580.8 459.8" stroke="#27406b" stroke-width="1.5" stroke-dasharray="1.5 1.5"/><circle cx="545.6" cy="370.4" r="2.1" fill="#8cb6ee"/><circle cx="560.0500000000001" cy="370.4" r="2.1" fill="#8cb6ee"/><circle cx="574.5" cy="370.4" r="2.1" fill="#8cb6ee"/><circle cx="588.95" cy="370.4" r="2.1" fill="#8cb6ee"/><circle cx="603.4" cy="370.4" r="2.1" fill="#8cb6ee"/><circle cx="617.85" cy="370.4" r="2.1" fill="#8cb6ee"/><circle cx="631.8" cy="370.4" r="2.1" fill="#f2b0dc"/><circle cx="646.3" cy="370.4" r="2.1" fill="#8cb6ee"/><circle cx="660.6" cy="370.4" r="2.1" fill="#2c3e63"/><circle cx="563.8" cy="390.5" r="2.1" fill="#8cb6ee"/><circle cx="579.9499999999999" cy="390.5" r="2.1" fill="#8cb6ee"/><circle cx="596.0999999999999" cy="390.5" r="2.1" fill="#8cb6ee"/><circle cx="612.25" cy="390.5" r="2.1" fill="#8cb6ee"/><circle cx="628.4" cy="390.5" r="2.1" fill="#8cb6ee"/><circle cx="644.55" cy="390.5" r="2.1" fill="#8cb6ee"/><circle cx="660.8" cy="390.5" r="2.1" fill="#8cb6ee"/><circle cx="677" cy="390.5" r="2.1" fill="#f2b0dc"/><circle cx="547.6" cy="390.5" r="2.1" fill="#c8752c"/><circle cx="590.8" cy="443.8" r="2.1" fill="#8cb6ee"/><circle cx="549" cy="460.2" r="2.1" fill="#c8752c"/><circle cx="580.8" cy="460.2" r="2.1" fill="#8cb6ee"/><circle cx="611" cy="460.2" r="2.1" fill="#8cb6ee"/><circle cx="545.6" cy="221.8" r="2.1" fill="#c8752c"/><circle cx="576.8" cy="222" r="2.1" fill="#8cb6ee"/><circle cx="545.8" cy="244" r="2.1" fill="#c8752c"/><circle cx="390" cy="221.8" r="2.1" fill="#c8752c"/><circle cx="390" cy="255.8" r="2.1" fill="#c8752c"/><circle cx="390.2" cy="285.6" r="2.1" fill="#c8752c"/><rect x="474.29999999999995" y="224.3" width="11.2" height="8.6" rx=".8" fill="#2a2a33"/><rect x="474.9" y="225.00" width="10" height="1.85" fill="#52aef4"/><rect x="474.9" y="227.65" width="10" height="1.85" fill="#52aef4"/><rect x="474.9" y="230.30" width="10" height="1.85" fill="#52aef4"/><rect x="474.29999999999995" y="258.4" width="11.2" height="8.6" rx=".8" fill="#2a2a33"/><rect x="474.9" y="259.10" width="10" height="1.85" fill="#52aef4"/><rect x="474.9" y="261.75" width="10" height="1.85" fill="#52aef4"/><rect x="474.9" y="264.40" width="10" height="1.85" fill="#52aef4"/><rect x="474.29999999999995" y="288.09999999999997" width="11.2" height="8.6" rx=".8" fill="#2a2a33"/><rect x="474.9" y="288.80" width="10" height="1.85" fill="#52aef4"/><rect x="474.9" y="291.45" width="10" height="1.85" fill="#52aef4"/><rect x="474.9" y="294.10" width="10" height="1.85" fill="#52aef4"/><rect x="630.0999999999999" y="224.3" width="11.2" height="8.6" rx=".8" fill="#2a2a33"/><rect x="630.7" y="225.00" width="10" height="1.85" fill="#52aef4"/><rect x="630.7" y="227.65" width="10" height="1.85" fill="#52aef4"/><rect x="630.7" y="230.30" width="10" height="1.85" fill="#52aef4"/><rect x="630.3" y="246.50000000000003" width="11.2" height="8.6" rx=".8" fill="#2a2a33"/><rect x="630.9" y="247.20" width="10" height="1.85" fill="#52aef4"/><rect x="630.9" y="249.85" width="10" height="1.85" fill="#52aef4"/><rect x="630.9" y="252.50" width="10" height="1.85" fill="#52aef4"/><rect x="631.8" y="393.09999999999997" width="11.2" height="8.6" rx=".8" fill="#2a2a33"/><rect x="632.4" y="393.80" width="10" height="1.85" fill="#52aef4"/><rect x="632.4" y="396.45" width="10" height="1.85" fill="#52aef4"/><rect x="632.4" y="399.10" width="10" height="1.85" fill="#52aef4"/><rect x="633.5" y="462.9" width="11.2" height="8.6" rx=".8" fill="#2a2a33"/><rect x="634.1" y="463.60" width="10" height="1.85" fill="#52aef4"/><rect x="634.1" y="466.25" width="10" height="1.85" fill="#52aef4"/><rect x="634.1" y="468.90" width="10" height="1.85" fill="#52aef4"/><circle cx="391.8" cy="229.5" r="4.3" stroke="#e09a30" stroke-width="1.15"/><path d="M391.8 224.9v4.4" stroke="#2e2010" stroke-width="2.4"/><path d="M391.8 224.6v5" stroke="#e09a30" stroke-width="1.2"/><circle cx="391.8" cy="263.59999999999997" r="4.3" stroke="#e09a30" stroke-width="1.15"/><path d="M391.8 258.99999999999994v4.4" stroke="#2e2010" stroke-width="2.4"/><path d="M391.8 258.7v5" stroke="#e09a30" stroke-width="1.2"/><circle cx="391.8" cy="293.29999999999995" r="4.3" stroke="#e09a30" stroke-width="1.15"/><path d="M391.8 288.69999999999993v4.4" stroke="#2e2010" stroke-width="2.4"/><path d="M391.8 288.4v5" stroke="#e09a30" stroke-width="1.2"/><circle cx="547.5999999999999" cy="229.5" r="4.3" stroke="#e09a30" stroke-width="1.15"/><path d="M547.5999999999999 224.9v4.4" stroke="#2e2010" stroke-width="2.4"/><path d="M547.5999999999999 224.6v5" stroke="#e09a30" stroke-width="1.2"/><circle cx="547.8" cy="251.70000000000002" r="4.3" stroke="#e09a30" stroke-width="1.15"/><path d="M547.8 247.10000000000002v4.4" stroke="#2e2010" stroke-width="2.4"/><path d="M547.8 246.8v5" stroke="#e09a30" stroke-width="1.2"/><circle cx="549.3" cy="398.29999999999995" r="4.3" stroke="#e09a30" stroke-width="1.15"/><path d="M549.3 393.69999999999993v4.4" stroke="#2e2010" stroke-width="2.4"/><path d="M549.3 393.4v5" stroke="#e09a30" stroke-width="1.2"/><circle cx="551.0" cy="468.09999999999997" r="4.3" stroke="#e09a30" stroke-width="1.15"/><path d="M551.0 463.49999999999994v4.4" stroke="#2e2010" stroke-width="2.4"/><path d="M551.0 463.2v5" stroke="#e09a30" stroke-width="1.2"/></svg>
</div>
</div>

<!-- ============ ShaderTexStitch ============ -->
<div class="shadow" style="left:358px;top:24px;width:474px;height:148.5px;box-shadow:0 8px 18px rgba(0,0,0,.38),0 0 1px rgba(0,0,0,.5)"></div>
<div class="win" id="shader" style="left:358px;top:24px;width:474px;height:148.5px">
<div class="title active"><span style="position:absolute;left:211.8px;top:0;font-size:7.65px;font-weight:bold;color:#484848">ShaderTexStitch</span><svg style="left:201.8px;top:4.4px" width="5.4" height="7" viewBox="0 0 6 8"><rect x=".3" y=".3" width="5.4" height="7.4" rx=".6" fill="#555" /><path d="M1.2 2h3.6M1.2 3.6h3.6M1.2 5.2h3.6" stroke="#eee" stroke-width=".6"/><rect x="1" y="5.6" width="4" height="1.6" fill="#222"/></svg><i class="tl" style="left:5px;background:#ed6a5e"></i><i class="tl" style="left:16.5px;background:#f4bf4f"></i><i class="tl" style="left:28px;background:#61c554"></i></div>
<div class="patch" style="left:20px;top:36px;width:436.2px;height:94.8px;border:1px solid #1c1c1c;border-left:0"></div>
<div class="abs" style="left:-358px;top:-24px;width:1000px;height:646px">
<svg style="left:0;top:0" width="1000" height="646" viewBox="0 0 1000 646" fill="none" stroke="#5b5b5b" stroke-width="1"><path d="M400.2 45.9v9.2" stroke-width="0.9"/><path d="M409.4 45.9v9.2" stroke-width="0.5"/><path d="M400 46.9h9.6M400 54.1h9.6" stroke-width="2.2"/><path d="M426.4 46.3h-9v8.4h9" stroke-width="1"/><path d="M420.5 50.5h3.5" stroke-width="1.6"/><path d="M433.6 47.3h9.3v6h-1.6l.4 2.4-2.8-2.4h-5.3z" fill="#5b5b5b" stroke="none"/><rect x="450.4" y="46.199999999999996" width="9.2" height="8.8" stroke-width="0.9"/><path d="M453.0 48.6l4 4M457.0 48.6l-4 4" stroke-width="0.9"/><rect x="467.2" y="46.199999999999996" width="9.2" height="8.8" stroke-width="0.9"/><circle cx="471.8" cy="50.5" r="2.2" stroke-width="0.9"/><rect x="484.2" y="46.199999999999996" width="9.2" height="8.8" stroke-width="0.9"/><path d="M487.2 48.7l3 1.8-3 1.8z" fill="#5b5b5b" stroke="none"/><rect x="500.8" y="46.199999999999996" width="9.2" height="8.8" stroke-width="0.9"/><path d="M500.8 50.5h9.2" stroke-width="0.9"/><path d="M519.8 54.7a4.7 4.7 0 1 1 4.4 0" stroke-width="1.1"/><path d="M521.8 51.1l2.2-3" stroke-width="1"/><path d="M535.2 50.5h7.6M539 46.7v7.6" stroke-width="1.3"/><path d="M560.9 51.1l4.4-4.6 4.8 4.2-3.8 3.9q-.8.8-1.6 0z" fill="#5b5b5b" stroke="none"/><path d="M563.5 48.3l1.8-2a1 1 0 0 1 1.5 0l.6.6" stroke-width="0.8"/><path d="M569.5 52.3q1.8 2.4 0 3.2q-1.8-.8 0-3.2z" fill="#5b5b5b" stroke="none"/><path d="M562.1 51.1h6.6" stroke="#3a3a3a" stroke-width="0.6"/><path d="M470.1 56.4h3.4l-1.7 2z" fill="#5b5b5b" stroke="none"/><path d="M487.1 56.4h3.4l-1.7 2z" fill="#5b5b5b" stroke="none"/><path d="M503.7 56.4h3.4l-1.7 2z" fill="#5b5b5b" stroke="none"/><path d="M520.3 56.4h3.4l-1.7 2z" fill="#5b5b5b" stroke="none"/><path d="M537.3 56.4h3.4l-1.7 2z" fill="#5b5b5b" stroke="none"/><path d="M382 49.3h3.6l-1.8 2.6z" fill="#f4f4f4" stroke="none"/><path d="M799 47.85H811M799 49.77H811M799 51.69H811M799 53.61H811M799 55.53H811M807 45.90H811M799 57.50H801" stroke="#e6e6e6" stroke-width="1.55" stroke-dasharray="1.62 .38" stroke-linecap="butt"/><rect x="805" y="47.1" width="1.62" height="1.55" fill="#e8c400" stroke="none"/></svg><div class="abs" style="left:362.5px;top:45.0px;font-size:6.6px;line-height:11px;color:#f4f4f4;font-weight:bold;letter-spacing:-.05px;text-shadow:0 0 .4px #f4f4f4">100%</div>
<svg style="left:0;top:0" width="1000" height="646" viewBox="0 0 1000 646" fill="none" stroke-width="1"><rect x="364" y="162.6" width="8" height="6.2" rx=".9" fill="#f2f2f2"/><path d="M365.7 162.79999999999998v-1.7a2.3 2.3 0 0 1 4.6 0v1.7" stroke="#f2f2f2" stroke-width="1.5"/><rect x="367.3" y="164.6" width="1.4" height="2.2" rx=".5" fill="#3a3a3a"/><path d="M391.0 164.6v-5.4h-9.2v8.6h5.6" stroke="#5a5a5a" stroke-width="0.9"/><path d="M385.59999999999997 162.4l5.4 2.4-2.3.8 1.8 2.6-1 .7-1.8-2.6-1.6 1.7z" fill="#5a5a5a"/><rect x="408.0" y="159.0" width="10.4" height="6.4" fill="#f2f2f2"/><path d="M409.8 168.4l3.4-3 3.4 3" stroke="#f2f2f2" stroke-width="1.1"/><rect x="434.40000000000003" y="159.4" width="7.8" height="5.6" fill="#f2f2f2"/><rect x="437.2" y="162.2" width="8" height="5.8" fill="#f2f2f2" stroke="#3a3a3a" stroke-width="0.9"/><path d="M461.2 162.0h2.4l2.6-2v7.6l-2.6-2h-2.4z" fill="#5a5a5a"/><rect x="466.6" y="160.79999999999998" width="4.4" height="5.2" fill="#5a5a5a"/><path d="M468 166.0v2.6" stroke="#5a5a5a" stroke-width="0.9"/><path d="M478.40000000000003 161.4h8.8M478.40000000000003 164.0h8.8M478.40000000000003 166.6h8.8M480.2 159.4v8.8M482.8 159.4v8.8M485.40000000000003 159.4v8.8" stroke="#5a5a5a" stroke-width="0.8"/><path d="M515.4 161.4l3.8 5.2a1.7 1.7 0 0 0 2.8-2l-3.4-4.6a1.1 1.1 0 0 0-1.8 1.2l2.8 3.8" stroke="#5a5a5a" stroke-width="0.9"/><path d="M521 160.0h3.4M522.7 158.29999999999998v3.4" stroke="#5a5a5a" stroke-width="0.9"/><path d="M542 167.79999999999998l5-5.2" stroke="#f2f2f2" stroke-width="2.2" stroke-linecap="round"/><path d="M550.6 160.2l-2 2-1.6-.4-.4-1.6 2-2a3 3 0 1 0 2 2z" fill="#f2f2f2"/><circle cx="547.6" cy="162.0" r="2.4" fill="#f2f2f2"/><path d="M548.2 161.29999999999998l2.6-2.6" stroke="#3a3a3a" stroke-width="1.5"/><rect x="568.0" y="159.0" width="9.6" height="9.2" fill="#f2f2f2"/><path d="M571.1999999999999 159.0v9.2M574.4 159.0v9.2" stroke="#3a3a3a" stroke-width="0.7"/><path d="M571.1999999999999 159.0v5.4M574.4 159.0v5.4" stroke="#3a3a3a" stroke-width="1.7"/><path d="M593.6 160.0h10.8M594.2 162.1h9.6M593.6 164.2h10.8M594.2 166.3h9.6" stroke="#f2f2f2" stroke-width="1.3" stroke-dasharray="1.4 0.7"/><path d="M595.6 168.2h6.8" stroke="#f2f2f2" stroke-width="1.2"/><circle cx="792.5" cy="163.6" r="5.2" stroke="#626262" stroke-width="1.6" stroke-dasharray="7.2 .97" stroke-dashoffset="-.48"/><path d="M790.9 161.0l4.2 2.6-4.2 2.6z" fill="#fff"/><path d="M819.5 160.79999999999998a4 4 0 1 0 5 0" stroke="#5a5a5a" stroke-width="1.3"/><path d="M822 158.79999999999998v4.6" stroke="#5a5a5a" stroke-width="1.3"/></svg>
<svg style="left:0;top:0" width="1000" height="646" viewBox="0 0 1000 646" fill="none"><path d="M368 65.5l4.6 2.4v5.2l-4.6 2.4-4.6-2.4v-5.2z" fill="#f2f2f2"/><path d="M363.4 67.9l4.6 2.4 4.6-2.4M368 70.3v5.2" stroke="#3a3a3a" stroke-width="0.7" fill="none"/><circle cx="368" cy="88" r="4.7" stroke="#f2f2f2" stroke-width="1.1" fill="none"/><circle cx="368" cy="88" r="2.3" stroke="#f2f2f2" stroke-width="1.1" fill="none"/><rect x="363.7" y="102.8" width="8.6" height="5.4" rx=".8" stroke="#555" stroke-width="1.2" fill="none"/><path d="M362.7 104.3v2.4M373.3 104.3v2.4" stroke="#555" stroke-width=".9"/><ellipse cx="366.4" cy="127.4" rx="2.3" ry="1.8" fill="#f2f2f2"/><path d="M368.3 127.4v-8.4" stroke="#f2f2f2" stroke-width="1.1"/><path d="M368.3 119q3.6 1.2 3 5.2q-.6-2.4-3-2.8z" fill="#f2f2f2"/><path d="M363.4 137.6v8.8M372.6 137.6v8.8" stroke="#f2f2f2" stroke-width="1" stroke-dasharray="2.2 1.1"/><path d="M365.8 139l4.6 3-4.6 3z" fill="#f2f2f2"/><circle cx="820.8" cy="69.2" r="3.1" stroke="#f2f2f2" stroke-width="1.3" fill="none"/><path d="M823.2 71.60000000000001l3.2 3.2" stroke="#f2f2f2" stroke-width="1.6" stroke-linecap="round"/><circle cx="822" cy="88" r="4.8" fill="#f2f2f2"/><text x="822.2" y="90.9" font-size="8.2" font-style="italic" font-weight="bold" font-family="'Liberation Serif',serif" text-anchor="middle" fill="#3a3a3a">i</text><rect x="817.2" y="102.2" width="4.4" height="7.2" fill="#f2f2f2"/><rect x="822.4" y="102.2" width="4.4" height="7.2" fill="#f2f2f2"/><path d="M817.2 120.8h9.4M817.2 122.8h9.4M817.2 124.8h9.4M817.2 126.8h9.4M817.2 128.79999999999998h9.4" stroke="#d4d4d4" stroke-width="1.4"/><path d="M819.4 120.0v9.6" stroke="#3a3a3a" stroke-width="0.6"/><circle cx="826.8" cy="121.39999999999999" r="2.6" fill="#fff" stroke="#3a3a3a" stroke-width=".7"/><rect x="817.2" y="143.29999999999998" width="9.8" height="8.2" rx="1.2" fill="#f2f2f2"/><rect x="818.6" y="141.89999999999998" width="4.6" height="2.4" rx=".6" fill="#f2f2f2"/><circle cx="822.6" cy="147.5" r="2.7" fill="#3a3a3a"/><circle cx="822.6" cy="147.5" r="1.3" fill="#f2f2f2"/></svg>
<svg style="left:0;top:0" width="1000" height="646" viewBox="0 0 1000 646" fill="none" stroke="#a2a2a2" stroke-width="1.35" stroke-linecap="round"><path d="M407.5 81C407.5 85 394.5 84 394.5 89"/><path d="M516.3 83C516.3 86.5 510 85.2 504 85.4C496 85.6 491.3 85 491.3 89"/><path d="M577.5 81Q577.5 83.6 582 84.6L587 86Q590 87 590 89"/><path d="M616 81Q616 84 608 84.3L596 85.2Q590 85.8 590 89"/><path d="M590 117v9.5"/><path d="M394 117v10.5" stroke="#7a5a5a"/><path d="M590.2 138.5V141Q590.2 144 594 144H688Q692 144 692 140V86Q692 82 689.7 82Q687.5 82 687.5 86V89"/><path d="M784.6 89V86Q784.6 82.3 788.5 82.3H791.5Q795.8 82.3 795.8 87V141Q795.8 146 791 146H712Q707.6 146 707.6 142V138.7"/><path d="M785.3 117V120Q785.3 123 782 123H711Q707.6 123 707.6 126"/></svg>
<div class="abs" style="left:395px;top:69.8px;width:24px;height:10.8px;background:#343434;border:1px solid #262626;border-radius:1px"><span class="sx" style="left:3.2px;top:-.8px;font-size:8px;color:#7c7c7c;transform:scaleX(0.980)">relax</span></div>
<div class="obj" style="left:511.2px;top:70.6px;width:32.8px;height:12.2px;"><span class="sx" style="left:2.4px;top:1px;font-size:7.9px;transform:scaleX(0.809)">loadbang</span></div>
<div class="obj" style="left:572.8px;top:69px;width:35.8px;height:12.2px;"><span class="sx" style="left:2.4px;top:1px;font-size:7.9px;transform:scaleX(0.799)">closebang</span></div>
<div class="obj" style="left:611px;top:68.4px;width:34.6px;height:12.2px;"><span class="sx" style="left:2.4px;top:1px;font-size:7.9px;transform:scaleX(0.823)">savebang</span></div>
<div class="obj" style="left:389px;top:127.2px;width:39.5px;height:12.2px;"><span class="sx" style="left:2.4px;top:1px;font-size:7.9px;transform:scaleX(0.798)">thispatcher</span></div>
<div class="obj" style="left:441px;top:127.2px;width:46px;height:12.2px;"><span class="sx" style="left:2.4px;top:1px;font-size:7.9px;transform:scaleX(0.828)">p Workspace</span></div>
<div class="obj" style="left:584.8px;top:126.2px;width:115px;height:12.2px;"><span class="sx" style="left:2.4px;top:1px;font-size:7.9px;transform:scaleX(0.823)">pattrstorage settings @savemode 2</span></div>
<div class="obj" style="left:702px;top:126px;width:70px;height:12.8px;border-top:2.6px solid #4fc4ec;border-bottom:2.4px solid #4fc4ec;background:#333;"><span class="sx" style="left:2.6px;top:0.1px;font-size:7.9px;transform:scaleX(0.807)">sparck.device sparck</span></div>
<div class="abs" style="left:389px;top:88.8px;width:399.8px;height:28.2px;background:#303030;border:1px solid #141414"></div>
<div class="abs" style="left:562px;top:90px;width:109px;height:26px;background:#b3dbf3"></div>
<div class="abs" style="left:432.2px;top:91.4px;width:18.8px;height:9.8px;background:#3e3e3e"></div>
<div class="abs" style="left:413.8px;top:102.2px;width:37.8px;height:12.4px;background:#eda234"></div>
<div class="abs" style="left:564px;top:104.5px;width:24.6px;height:8.6px;background:#aaa"></div>
<span class="sx" style="left:416px;top:91.6px;font-size:8.8px;font-weight:bold;color:#fff;transform:scaleX(0.919)">60</span>
<span class="sx" style="left:437px;top:91.4px;font-size:8px;color:#fff;text-shadow:0 0 .5px #fff;transform:scaleX(0.900)">fps</span>
<span class="sx" style="left:416.4px;top:103.2px;font-size:8px;color:#fff;text-shadow:0 0 .5px #fff;transform:scaleX(0.807)">60 hz</span>
<span class="sx" style="left:568px;top:103.8px;font-size:8px;color:#fff;text-shadow:0 0 .5px #fff;transform:scaleX(0.922)">reset</span>
<svg style="left:0;top:0" width="1000" height="646" viewBox="0 0 1000 646" fill="none" stroke-linecap="round" stroke-linejoin="round"><defs><pattern id="xx" x="575" y="92.3" width="5.4" height="4.9" patternUnits="userSpaceOnUse"><path d="M.8 .3Q2.7 .9 2.7 2.45Q2.7 4 .8 4.6M4.6 .3Q2.7 .9 2.7 2.45Q2.7 4 4.6 4.6" stroke="#7f97a6" stroke-width=".9" fill="none"/></pattern></defs><rect x="391" y="94.6" width="20.2" height="19.6" rx=".6" stroke="#15151f" stroke-width="2.2"/><rect x="391" y="94.6" width="20.2" height="19.6" rx=".6" stroke="#e09a30" stroke-width="1"/><path d="M394.4 103.2L399 107.3L414.6 91.2" stroke="#e6a030" stroke-width="1.1"/><path d="M442.6 107.2h5.6l-2.8 3.4z" fill="#fff"/><path d="M465 92.6A10.5 10.5 0 1 1 459.75 94" stroke="#46a0de" stroke-width="1.3"/><path d="M468.84 108.59A6.7 6.7 0 1 1 471.67 102.5" stroke="#46a0de" stroke-width="1.3"/><path d="M469.5 101.7l2.2 2.4 2.2-2.4" stroke="#46a0de" stroke-width="1.2"/><path d="M490.6 100H486.2V92.6H501V100H494.4M486.4 107.6H480.2V114.8H494.6V107.6H490.2" stroke="#8a8a8a" stroke-width="1.2"/><path d="M491.8 101.2L489 106.2" stroke="#b0b0b0" stroke-width="1"/><circle cx="492.4" cy="99.9" r="1.4" stroke="#b0b0b0" stroke-width=".9"/><circle cx="488.4" cy="107.5" r="1.4" stroke="#b0b0b0" stroke-width=".9"/><path d="M509 113.4l1.2-5.2 13.8-14 3.8 3.8-13.8 14zM521.6 96.6l3.8 3.8" stroke="#8a8a8a" stroke-width="1.1"/><path d="M535.6 95.6L546.6 91l10 5.2L544.2 100.6z" fill="#2a2a2e"/><path d="M535.6 95.6l8.6 5v13l-8-6.6z" fill="#4c5964"/><path d="M544.2 100.6L556.6 96.2l-.8 11.4-11.6 6z" fill="#60727f"/><path d="M535.6 95.6L546.6 91l10 5.2-.8 11.4-11.6 6-8-6.6zM535.6 95.6l8.6 5 12.4-4.4M544.2 100.6v13" stroke="#45a9ee" stroke-width="1.2"/><rect x="563.9" y="92.6" width="10" height="9" fill="#52b9f5" stroke="#2d4a5c" stroke-width=".8"/><rect x="594" y="92.3" width="32" height="4.9" fill="#a0bfd0"/><rect x="575" y="97.2" width="21" height="4.9" fill="#a0bfd0"/><rect x="622" y="97.2" width="44.8" height="4.9" fill="#a0bfd0"/><rect x="575" y="92.3" width="91.8" height="9.8" fill="url(#xx)"/><path d="M675.3 103C680 93.9 691.4 93.9 696 103C691.4 112.1 680 112.1 675.3 103z" stroke="#46a0de" stroke-width="1.3"/><circle cx="685.6" cy="103" r="3.5" stroke="#46a0de" stroke-width="1.3"/><path d="M722.20 102.90L722.07 103.61L721.65 104.28L720.13 104.68L718.60 104.88L718.12 105.25L717.85 105.66L717.75 106.13L717.83 106.73L718.77 107.96L719.56 109.32L719.39 110.08L718.98 110.68L718.38 111.09L717.62 111.26L716.26 110.47L715.03 109.53L714.43 109.45L713.96 109.55L713.55 109.82L713.18 110.30L712.98 111.83L712.58 113.35L711.91 113.77L711.20 113.90L710.49 113.77L709.82 113.35L709.42 111.83L709.22 110.30L708.85 109.82L708.44 109.55L707.97 109.45L707.37 109.53L706.14 110.47L704.78 111.26L704.02 111.09L703.42 110.68L703.01 110.08L702.84 109.32L703.63 107.96L704.57 106.73L704.65 106.13L704.55 105.66L704.28 105.25L703.80 104.88L702.27 104.68L700.75 104.28L700.33 103.61L700.20 102.90L700.33 102.19L700.75 101.52L702.27 101.12L703.80 100.92L704.28 100.55L704.55 100.14L704.65 99.67L704.57 99.07L703.63 97.84L702.84 96.48L703.01 95.72L703.42 95.12L704.02 94.71L704.78 94.54L706.14 95.33L707.37 96.27L707.97 96.35L708.44 96.25L708.85 95.98L709.22 95.50L709.42 93.97L709.82 92.45L710.49 92.03L711.20 91.90L711.91 92.03L712.58 92.45L712.98 93.97L713.18 95.50L713.55 95.98L713.96 96.25L714.43 96.35L715.03 96.27L716.26 95.33L717.62 94.54L718.38 94.71L718.98 95.12L719.39 95.72L719.56 96.48L718.77 97.84L717.83 99.07L717.75 99.67L717.85 100.14L718.12 100.55L718.60 100.92L720.13 101.12L721.65 101.52L722.07 102.19z" stroke="#46a0de" stroke-width="1.25" stroke-linejoin="round"/><circle cx="711.2" cy="102.9" r="2.5" stroke="#46a0de" stroke-width="1.25"/><circle cx="516.3" cy="82.6" r=".9" fill="#222" stroke="#c8c832" stroke-width=".5"/><circle cx="577.5" cy="80.8" r=".9" fill="#222" stroke="#c8c832" stroke-width=".5"/><circle cx="616" cy="80.6" r=".9" fill="#222" stroke="#c8c832" stroke-width=".5"/><circle cx="590.2" cy="138.4" r=".9" fill="#222" stroke="#c8c832" stroke-width=".5"/><circle cx="707.6" cy="138.6" r=".9" fill="#222" stroke="#c8c832" stroke-width=".5"/><circle cx="394" cy="127.4" r=".9" fill="#222" stroke="#e08878" stroke-width=".5"/><circle cx="590" cy="126.4" r=".9" fill="#222" stroke="#e08878" stroke-width=".5"/><circle cx="707.6" cy="126.2" r=".9" fill="#222" stroke="#e08878" stroke-width=".5"/></svg>
</div>
</div>

<!-- ============ Desktop folders ============ -->
<svg style="left:900.6px;top:582.6px" width="34.4" height="29" viewBox="0 0 34.4 29"><path d="M0 2.2Q0 0 2.2 0H9.6Q11 0 12 1.2L13.6 3.2H32.2Q34.4 3.2 34.4 5.4V10H0z" fill="#4b97da"/><path d="M0 7.6Q0 6 1.6 6H32.8Q34.4 6 34.4 7.6V26.8Q34.4 29 32.2 29H2.2Q0 29 0 26.8z" fill="#88caf6"/><path d="M0 26Q0 29 2.2 29H32.2Q34.4 29 34.4 26" fill="none" stroke="#6fb4e6" stroke-width=".8"/></svg>
<svg style="left:950.6px;top:583.8px" width="34.4" height="29" viewBox="0 0 34.4 29"><path d="M0 2.2Q0 0 2.2 0H9.6Q11 0 12 1.2L13.6 3.2H32.2Q34.4 3.2 34.4 5.4V10H0z" fill="#4b97da"/><path d="M0 7.6Q0 6 1.6 6H32.8Q34.4 6 34.4 7.6V26.8Q34.4 29 32.2 29H2.2Q0 29 0 26.8z" fill="#88caf6"/><path d="M0 26Q0 29 2.2 29H32.2Q34.4 29 34.4 26" fill="none" stroke="#6fb4e6" stroke-width=".8"/></svg>
<span class="sx" style="left:903px;top:619.6px;font-size:6.9px;font-weight:bold;color:#fff;text-shadow:0 .6px 1.2px rgba(0,0,0,.75),0 0 2px rgba(0,0,0,.35);transform:scaleX(1.013)">SPARCK</span>
<span class="sx" style="left:939.8px;top:620.8000000000001px;font-size:6.9px;font-weight:bold;color:#fff;text-shadow:0 .6px 1.2px rgba(0,0,0,.75),0 0 2px rgba(0,0,0,.35);transform:scaleX(1.036)">Node_Examples</span>

</div>
</body>
</html>
